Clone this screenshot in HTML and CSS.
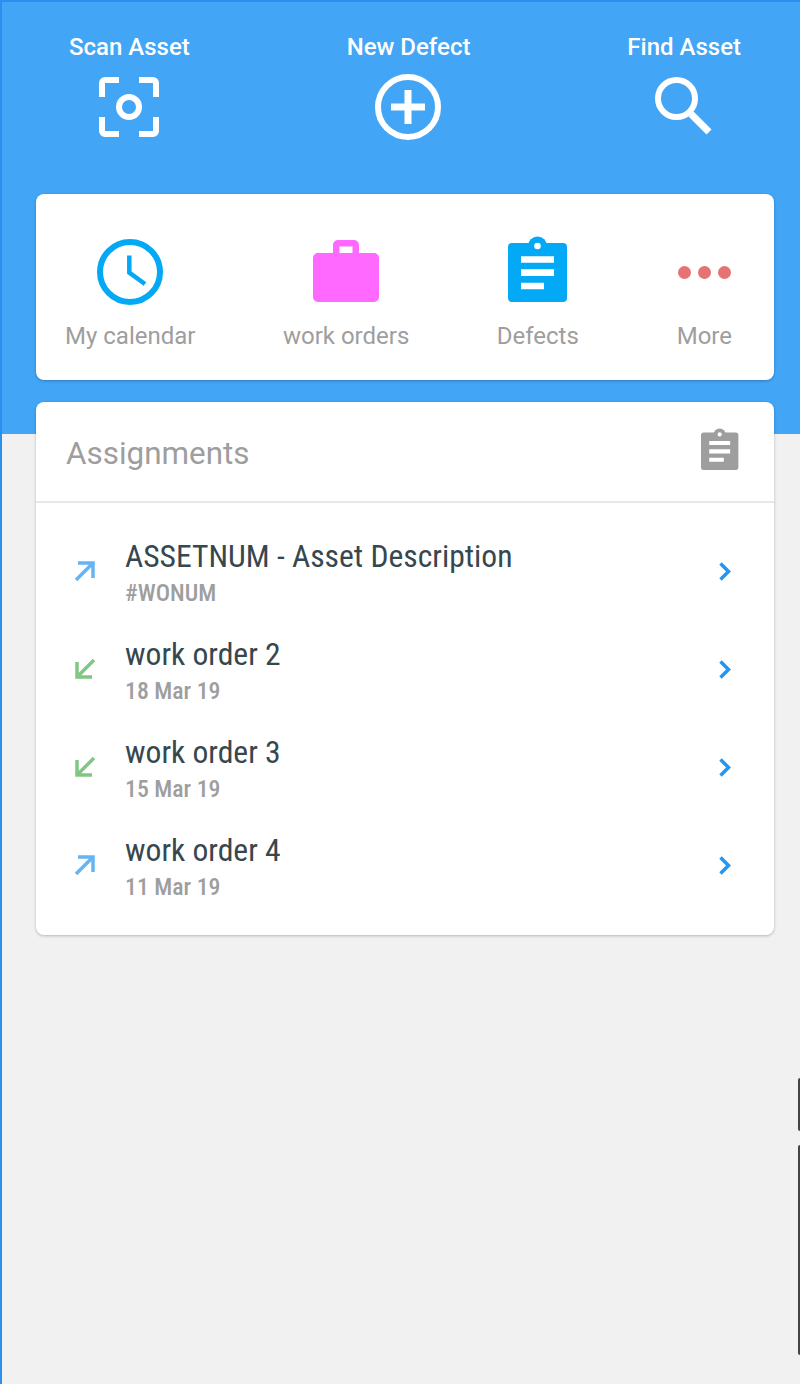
FILE: index.html
```html
<!DOCTYPE html>
<html lang="en">
  <head>
    <meta charset="UTF-8" />
    <title>Assignments</title>
    <link rel="stylesheet" href="styles.css">
  </head>
  <body>
    <div class="hero">
      <div class="actions">
        <div class="action">
          <span>Scan Asset</span>
          <svg class="icon-scan" viewBox="0 0 60 60" fill="none" stroke="#fff" stroke-width="6">
            <path d="M3 20V6a3 3 0 0 1 3-3H20M40 3H54a3 3 0 0 1 3 3V20M57 40V54a3 3 0 0 1-3 3H40M20 57H6a3 3 0 0 1-3-3V40" />
            <circle cx="30" cy="30" r="10" />
          </svg>
        </div>
        <div class="action">
          <span>New Defect</span>
          <svg class="icon-add" viewBox="0 0 66 66" fill="none" stroke="#fff">
            <circle cx="33" cy="33" r="30" stroke-width="6" />
            <path d="M33 16V50M16 33H50" stroke-width="7" />
          </svg>
        </div>
        <div class="action">
          <span>Find Asset</span>
          <svg class="icon-find" viewBox="0 0 58 58" fill="none" stroke="#fff">
            <circle cx="21.5" cy="21.5" r="18.5" stroke-width="6" />
            <path d="M36 37L54 55" stroke-width="7" />
          </svg>
        </div>
      </div>

      <div class="card shortcuts">
        <div class="shortcut">
          <svg class="icon-clock" viewBox="0 0 66 66" fill="none" stroke="#03a9f4">
            <circle cx="33" cy="33" r="30" stroke-width="6" />
            <path d="M32.3 16.5V33.5L48 45" stroke-width="4.5" />
          </svg>
          <span>My calendar</span>
        </div>
        <div class="shortcut">
          <svg class="icon-case" viewBox="0 0 66 62">
            <path fill="#ff69ff" fill-rule="evenodd" d="M25 0H41a5 5 0 0 1 5 5V13H61a5 5 0 0 1 5 5V57a5 5 0 0 1-5 5H5a5 5 0 0 1-5-5V18a5 5 0 0 1 5-5H20V5a5 5 0 0 1 5-5ZM26.5 6.5V13H39.500V6.5Z" />
          </svg>
          <span>work orders</span>
        </div>
        <div class="shortcut">
          <svg class="icon-clip" viewBox="0 0 60 66">
            <rect x="0" y="7" width="59" height="59" rx="4" fill="#03a9f4" />
            <circle cx="29.500" cy="10" r="9.500" fill="#03a9f4" />
            <circle cx="29.500" cy="10" r="3.300" fill="#fff" />
            <path fill="#fff" d="M13 20.300H46V26.700H13ZM13 33.300H46V40H13ZM13 46.700H36V53.300H13Z" />
          </svg>
          <span>Defects</span>
        </div>
        <div class="shortcut more">
          <div class="dots"><i></i><i></i><i></i></div>
          <span>More</span>
        </div>
      </div>
    </div>

    <div class="card assignments">
      <div class="card-head">
        <h2>Assignments</h2>
        <svg class="icon-head" viewBox="0 0 60 66">
          <rect x="0" y="7" width="59" height="59" rx="4" fill="#9e9e9e" />
          <circle cx="29.500" cy="10" r="9.500" fill="#9e9e9e" />
          <circle cx="29.500" cy="10" r="3.300" fill="#fff" />
          <path fill="#fff" d="M13 20.300H46V26.700H13ZM13 33.300H46V40H13ZM13 46.700H36V53.300H13Z" />
        </svg>
      </div>
      <div class="list">
        <div class="row">
          <svg class="arrow" viewBox="0 0 20 20" fill="none" stroke="#64b5f6" stroke-width="3.500"><path d="M3 2H18V17M18 2L1 19" /></svg>
          <div class="row-text">
            <div class="row-title">ASSETNUM - Asset Description</div>
            <div class="row-sub">#WONUM</div>
          </div>
          <svg class="chevron" viewBox="0 0 12 19" fill="none" stroke="#2196f3" stroke-width="3.500"><path d="M1.500 1.500L9.500 9.500L1.500 17.500" /></svg>
        </div>
        <div class="row">
          <svg class="arrow" viewBox="0 0 20 20" fill="none" stroke="#81c784" stroke-width="3.500"><path d="M2 3V18H17M2 18L19 1" /></svg>
          <div class="row-text">
            <div class="row-title">work order 2</div>
            <div class="row-sub">18 Mar 19</div>
          </div>
          <svg class="chevron" viewBox="0 0 12 19" fill="none" stroke="#2196f3" stroke-width="3.500"><path d="M1.500 1.500L9.500 9.500L1.500 17.500" /></svg>
        </div>
        <div class="row">
          <svg class="arrow" viewBox="0 0 20 20" fill="none" stroke="#81c784" stroke-width="3.500"><path d="M2 3V18H17M2 18L19 1" /></svg>
          <div class="row-text">
            <div class="row-title">work order 3</div>
            <div class="row-sub">15 Mar 19</div>
          </div>
          <svg class="chevron" viewBox="0 0 12 19" fill="none" stroke="#2196f3" stroke-width="3.500"><path d="M1.500 1.500L9.500 9.500L1.500 17.500" /></svg>
        </div>
        <div class="row">
          <svg class="arrow" viewBox="0 0 20 20" fill="none" stroke="#64b5f6" stroke-width="3.500"><path d="M3 2H18V17M18 2L1 19" /></svg>
          <div class="row-text">
            <div class="row-title">work order 4</div>
            <div class="row-sub">11 Mar 19</div>
          </div>
          <svg class="chevron" viewBox="0 0 12 19" fill="none" stroke="#2196f3" stroke-width="3.500"><path d="M1.500 1.500L9.500 9.500L1.500 17.500" /></svg>
        </div>
      </div>
    </div>

    <!-- side buttons of the device, they sit over the page edge -->
    <div class="side-btn side-btn-short"></div>
    <div class="side-btn side-btn-long"></div>
  </body>
</html>
```

FILE: styles.css
```css
/* Basic styles */
html,
body {
  margin: 0;
  height: 1384px;
  overflow: hidden;
}

body {
  font-family: "Roboto", sans-serif;
  background-color: #f1f1f1;
  border-left: 2px solid #2b8ff0;
  box-sizing: border-box;
  position: relative;
}

svg {
  display: block;
}

.hero {
  background-color: #42a5f5;
  border-top: 2px solid #2b8ff0;
  height: 432px;
}

.actions {
  display: flex;
  justify-content: space-between;
  padding: 31px 59px 0 67px;
  height: 161px;
}

.action {
  display: flex;
  flex-direction: column;
  align-items: center;
  color: #fff;
  font-size: 24px;
  font-weight: 500;
  line-height: 28px;
}

.icon-scan {
  width: 60px;
  height: 60px;
  margin-top: 16px;
}

.icon-add {
  width: 66px;
  height: 66px;
  margin: 13px 0 0 -2px;
}

.icon-find {
  width: 58px;
  height: 58px;
  margin-top: 16px;
}

.card {
  background-color: #fff;
  border-radius: 8px;
  box-shadow: 0 1px 3px rgba(0, 0, 0, 0.25);
  margin: 0 26px 0 34px;
}

.shortcuts {
  display: flex;
  gap: 87.500px;
  height: 186px;
  padding: 0 42px 0 29px;
  box-sizing: border-box;
}

.shortcut {
  display: flex;
  flex-direction: column;
  align-items: center;
  justify-content: flex-end;
  padding-bottom: 30px;
  color: #9e9e9e;
  font-size: 24px;
  line-height: 28px;
}

.shortcut span {
  margin-top: 17px;
}

.more {
  margin-left: auto;
}

.icon-clock {
  width: 66px;
  height: 66px;
}

.icon-case {
  width: 66px;
  height: 62px;
  margin-bottom: 3px;
}

.icon-clip {
  width: 60px;
  height: 66px;
  margin-bottom: 3px;
}

.dots {
  display: flex;
  gap: 7px;
  height: 66px;
  align-items: center;
}

.dots i {
  width: 13px;
  height: 13px;
  border-radius: 50%;
  background-color: #e57373;
}

.assignments {
  margin-top: -32px;
  position: relative;
}

.card-head {
  display: flex;
  align-items: center;
  justify-content: space-between;
  height: 99px;
  padding: 0 35px 0 30px;
  border-bottom: 2px solid #e8e8e8;
}

.card-head h2 {
  margin: 0;
  padding-top: 3px;
  color: #9e9e9e;
  font-size: 31.400px;
  font-weight: 400;
}

.icon-head {
  width: 38px;
  height: 42px;
  margin-bottom: 6px;
}

.list {
  padding: 19px 0 21px;
}

.row {
  display: flex;
  align-items: center;
  height: 98px;
  padding: 0 43px 0 39px;
}

.arrow {
  width: 20px;
  height: 20px;
  flex: none;
}

.row-text {
  margin-left: 30px;
  padding-top: 8px;
  font-stretch: 75%;
}

.row-title {
  color: #37474f;
  font-size: 31.600px;
  line-height: 36px;
}

.row-sub {
  color: #9e9e9e;
  font-size: 23.800px;
  font-weight: 500;
  line-height: 37px;
}

.chevron {
  width: 12px;
  height: 19px;
  margin-left: auto;
}

.side-btn {
  position: absolute;
  right: 0;
  width: 2px;
  background-color: #444;
  border-radius: 2px 0 0 2px;
}

.side-btn-short {
  top: 1078px;
  height: 53px;
}

.side-btn-long {
  top: 1145px;
  height: 210px;
}
```
